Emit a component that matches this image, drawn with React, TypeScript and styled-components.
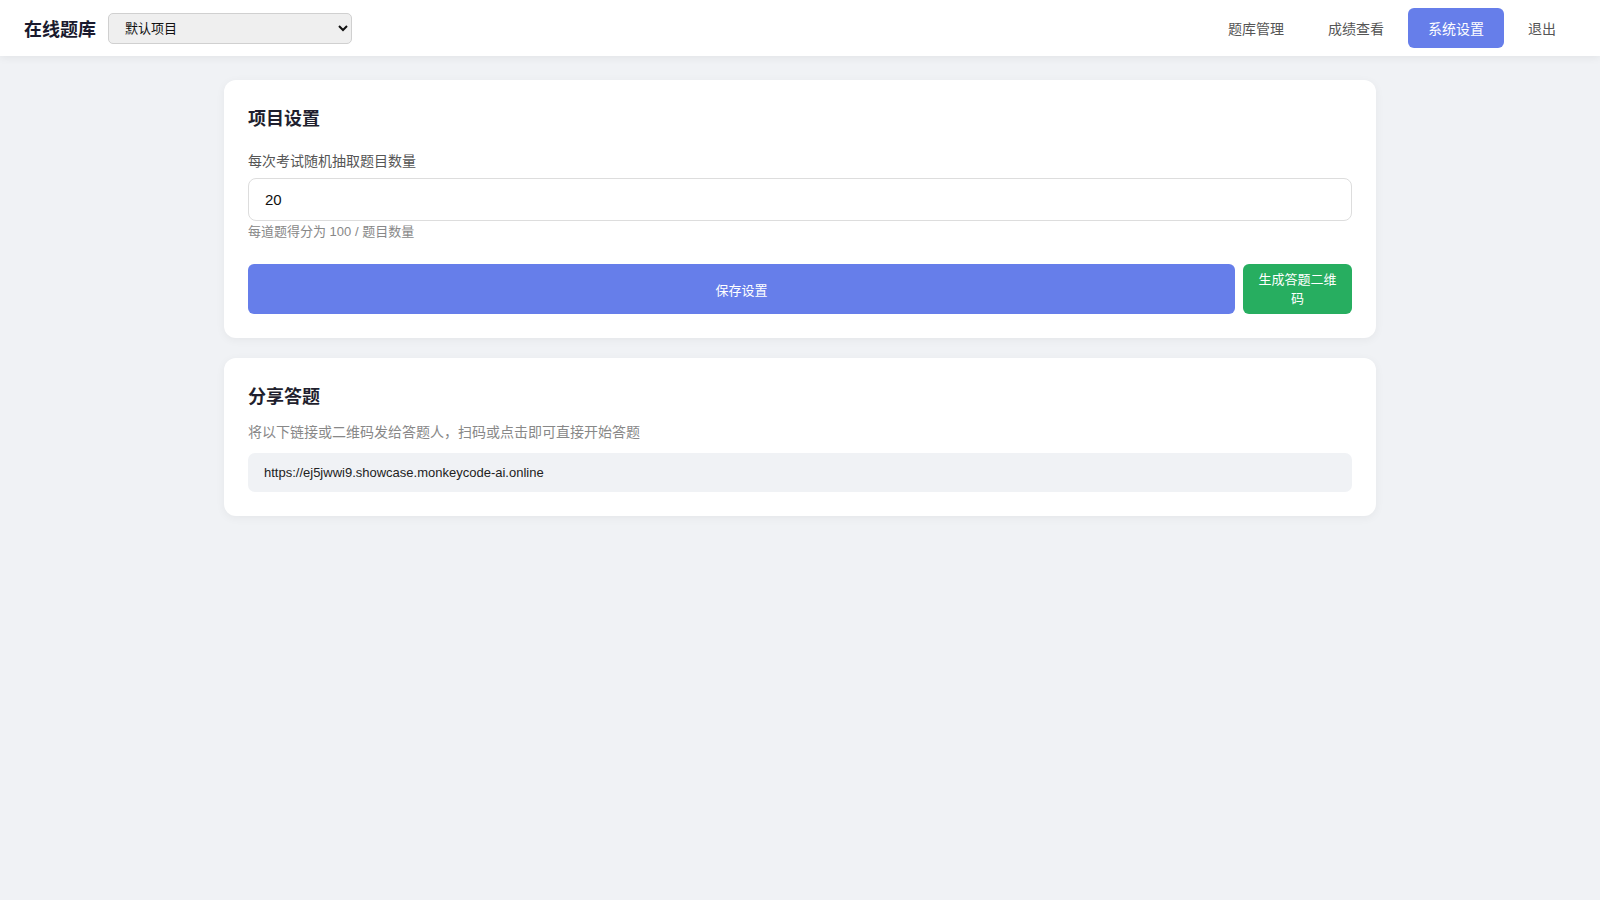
import React from 'react';
import styled, { createGlobalStyle } from 'styled-components';

const GlobalStyle = createGlobalStyle`
  * { box-sizing: border-box; }
  body {
    margin: 0;
    background: #f0f2f5;
    font-family: "Liberation Sans", Arial, "Noto Sans CJK SC", sans-serif;
    color: #333;
  }
`;

const Header = styled.header`
  align-items: center;
  background: #fff;
  box-shadow: 0 2px 8px rgba(0, 0, 0, 0.06);
  display: flex;
  height: 56px;
  justify-content: space-between;
  padding: 0 24px;
`;
const Brand = styled.div`
  align-items: center;
  display: flex;
  gap: 12px;
`;
const Logo = styled.h1`
  color: #1a1a2e;
  font-size: 18px;
  font-weight: 700;
  margin: 0;
`;
const ProjectSelect = styled.select`
  background-color: #efefef;
  border: 1px solid #d0d0d0;
  border-radius: 5px;
  color: #111;
  font-family: inherit;
  font-size: 13px;
  height: 31px;
  padding: 0 10px 0 12px;
  width: 244px;
`;
const Nav = styled.nav`
  display: flex;
  gap: 4px;
`;
const NavButton = styled.button<{ $active?: boolean }>`
  background: ${({ $active }) => ($active ? '#667eea' : 'transparent')};
  border: none;
  border-radius: 6px;
  color: ${({ $active }) => ($active ? '#fff' : '#555')};
  cursor: pointer;
  font-family: inherit;
  font-size: 14px;
  height: 40px;
  padding: 0 20px;
`;

const Main = styled.main`
  display: flex;
  flex-direction: column;
  gap: 20px;
  margin: 0 auto;
  max-width: 1200px;
  padding: 24px;
`;
const Card = styled.section`
  background: #fff;
  border-radius: 12px;
  box-shadow: 0 2px 10px rgba(0, 0, 0, 0.05);
  padding: 24px;
`;
const CardTitle = styled.h2<{ $gap: number }>`
  color: #1f1f2e;
  font-size: 18px;
  font-weight: 700;
  line-height: 27px;
  margin: 2px 0 ${({ $gap }) => $gap}px;
`;
const Label = styled.label`
  color: #555;
  display: block;
  font-size: 14px;
  line-height: 21px;
  margin-bottom: 6px;
`;
const TextInput = styled.input`
  border: 1px solid #ddd;
  border-radius: 8px;
  color: #111;
  display: block;
  font-family: inherit;
  font-size: 15px;
  height: 43px;
  padding: 0 16px;
  width: 100%;
`;
const Hint = styled.div`
  color: #888;
  font-size: 13px;
  line-height: 19px;
  margin-top: 1px;
`;
const Actions = styled.div`
  display: flex;
  gap: 8px;
  margin-top: 23px;
`;
const Button = styled.button<{ $variant: 'primary' | 'success' }>`
  background: ${({ $variant }) => ($variant === 'primary' ? '#667eea' : '#27ae60')};
  border: none;
  border-radius: 6px;
  color: #fff;
  cursor: pointer;
  flex: ${({ $variant }) => ($variant === 'primary' ? '1' : '0 0 109px')};
  font-family: inherit;
  font-size: 13px;
  line-height: 19px;
  min-height: 50px;
  padding: ${({ $variant }) => ($variant === 'primary' ? '8px 14px 6px' : '6px 14px')};
`;
const Description = styled.p`
  color: #888;
  font-size: 14px;
  line-height: 21px;
  margin: 0 0 10px;
`;
const LinkBox = styled.div`
  background: #f0f2f5;
  border-radius: 7px;
  color: #222;
  font-size: 13px;
  height: 39px;
  line-height: 39px;
  padding: 0 16px;
`;

const navItems = ['题库管理', '成绩查看', '系统设置', '退出'];

const App = () => {
  return (
    <>
      <GlobalStyle />
      <Header>
        <Brand>
          <Logo>在线题库</Logo>
          <ProjectSelect defaultValue='default'>
            <option value='default'>默认项目</option>
          </ProjectSelect>
        </Brand>
        <Nav>
          {navItems.map((item) => (
            <NavButton key={item} $active={item === '系统设置'}>
              {item}
            </NavButton>
          ))}
        </Nav>
      </Header>
      <Main>
        <Card>
          <CardTitle $gap={18}>项目设置</CardTitle>
          <Label htmlFor='count'>每次考试随机抽取题目数量</Label>
          <TextInput id='count' type='text' defaultValue='20' />
          <Hint>每道题得分为 100 / 题目数量</Hint>
          <Actions>
            <Button $variant='primary'>保存设置</Button>
            <Button $variant='success'>生成答题二维码</Button>
          </Actions>
        </Card>
        <Card>
          <CardTitle $gap={11}>分享答题</CardTitle>
          <Description>将以下链接或二维码发给答题人，扫码或点击即可直接开始答题</Description>
          <LinkBox>https://ej5jwwi9.showcase.monkeycode-ai.online</LinkBox>
        </Card>
      </Main>
    </>
  );
};

export default App;
